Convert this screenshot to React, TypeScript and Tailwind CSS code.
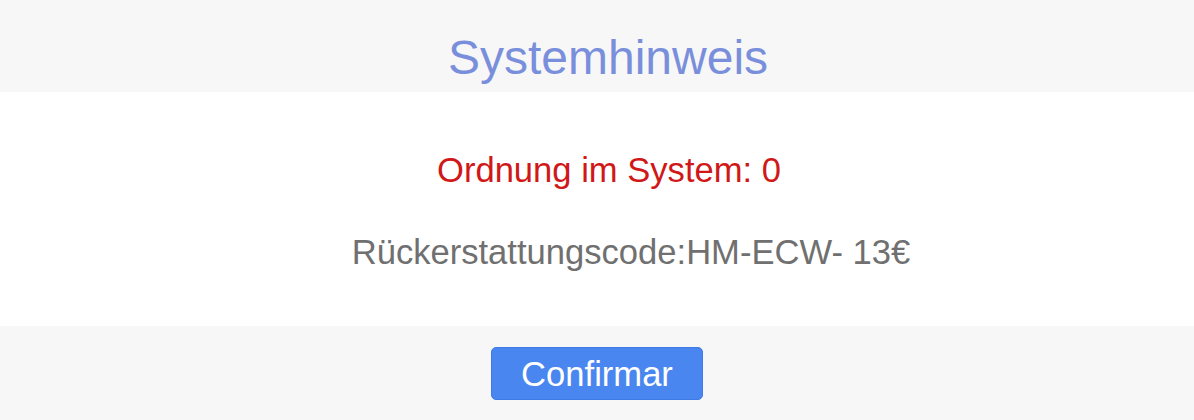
export default function App() {
  return (
    <div
      className="w-[1194px] h-[420px] flex flex-col bg-[#f7f7f7] overflow-hidden"
      style={{ fontFamily: '"Liberation Sans", Arial, sans-serif' }}
    >
      <div className="h-[92px] pt-[34px] flex justify-center pl-[22px]">
        <h1 className="text-[48px] leading-[48px] text-[#7a8fdc] font-normal">Systemhinweis</h1>
      </div>
      <div className="h-[234px] bg-white flex flex-col items-center pt-[58px]">
        <p className="text-[34.6px] leading-[40px] text-[#d01818] pl-[24px]">Ordnung im System: 0</p>
        <p className="mt-[42px] text-[34.6px] leading-[40px] text-[#707070] pl-[68px]">
          Rückerstattungscode:HM-ECW- 13€
        </p>
      </div>
      <div className="flex-1 flex justify-center pt-[21px]">
        <button className="w-[212px] h-[53px] rounded-[5px] bg-[#4a86f0] border border-[#3f7be6] text-white text-[34.6px] leading-[48px]">
          Confirmar
        </button>
      </div>
    </div>
  );
}
